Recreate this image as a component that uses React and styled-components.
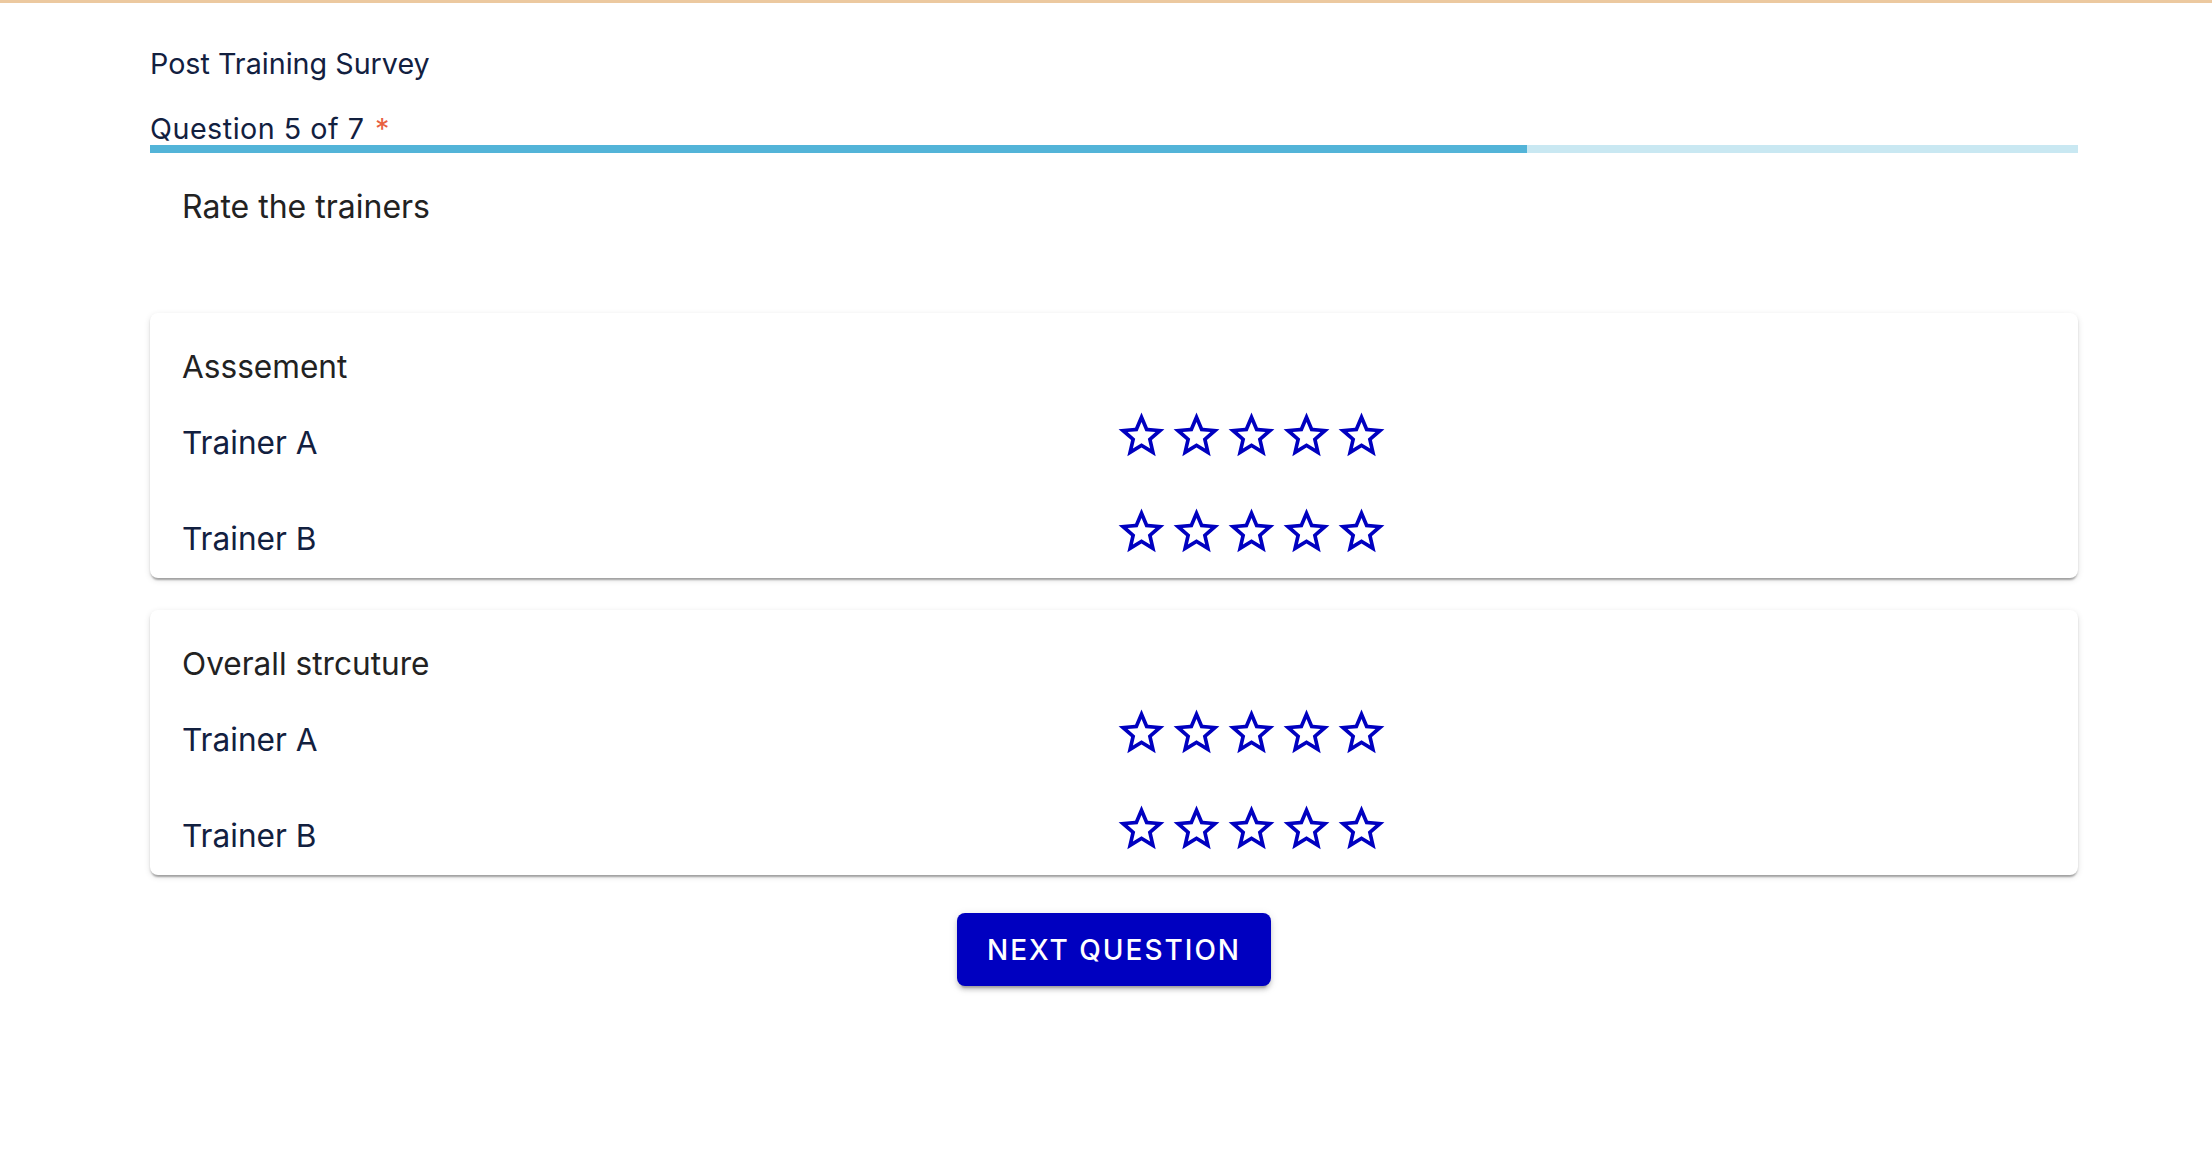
import React from "react";
import styled, { createGlobalStyle } from "styled-components";

const sections = [
  { title: "Asssement", trainers: ["Trainer A", "Trainer B"] },
  { title: "Overall strcuture", trainers: ["Trainer A", "Trainer B"] },
];

const StarIcon = () => (
  <svg viewBox="0 0 24 24" width="55" height="55" fill="currentColor">
    <path d="M22 9.24l-7.19-.62L12 2 9.19 8.63 2 9.24l5.46 4.73L5.82 21 12 17.27 18.18 21l-1.63-7.03L22 9.24zM12 15.4l-3.76 2.27 1-4.28-3.32-2.88 4.38-.38L12 6.1l1.71 4.04 4.38.38-3.32 2.88 1 4.28L12 15.4z" />
  </svg>
);

const App = () => {
  const current = 5;
  const total = 7;
  return (
    <>
      <GlobalStyle />
      <Page>
        <Container>
          <SurveyTitle>Post Training Survey</SurveyTitle>
          <QuestionLabel>
            Question {current} of {total} <Required>*</Required>
          </QuestionLabel>
          <Progress>
            <ProgressFill style={{ width: `${(current / total) * 100}%` }} />
          </Progress>
          <Prompt>Rate the trainers</Prompt>
          <Cards>
            {sections.map((s) => (
              <Card key={s.title}>
                <CardTitle>{s.title}</CardTitle>
                <Rows>
                  {s.trainers.map((t) => (
                    <Row key={t}>
                      <TrainerName>{t}</TrainerName>
                      <Rating>
                        {[1, 2, 3, 4, 5].map((n) => (
                          <StarButton key={n} aria-label={`${n} Stars`}>
                            <StarIcon />
                          </StarButton>
                        ))}
                      </Rating>
                    </Row>
                  ))}
                </Rows>
              </Card>
            ))}
          </Cards>
          <Actions>
            <NextButton>Next Question</NextButton>
          </Actions>
        </Container>
      </Page>
    </>
  );
};

export default App;

const GlobalStyle = createGlobalStyle`
  body {
    margin: 0;
    background: #ffffff;
    font-family: "Inter", "Roboto", "Liberation Sans", sans-serif;
  }
`;

const Page = styled.div`
  min-height: 1162px;
  border-top: 3px solid #ecc9a0;
  box-sizing: border-box;
  padding-top: 42px;
`;

const Container = styled.div`
  width: 1928px;
  margin-left: 150px;
`;

const SurveyTitle = styled.div`
  font-size: 28.7px;
  line-height: 38px;
  color: #12203f;
`;

const QuestionLabel = styled.div`
  margin-top: 23px;
  padding-top: 6px;
  font-size: 28.7px;
  line-height: 33px;
  letter-spacing: 0.5px;
  color: #12203f;
`;

const Required = styled.span`
  margin-left: 2px;
  color: #e8603f;
`;

const Progress = styled.div`
  height: 8px;
  background: #c9e8f2;
  overflow: hidden;
`;

const ProgressFill = styled.div`
  height: 100%;
  background: #53b4d8;
`;

const Prompt = styled.div`
  margin-top: 30px;
  padding-left: 32px;
  font-size: 32px;
  line-height: 48px;
  color: #222222;
`;

const Cards = styled.div`
  margin-top: 82px;
  display: flex;
  flex-direction: column;
  gap: 32px;
`;

const Card = styled.div`
  background: #ffffff;
  border-radius: 8px;
  padding: 30px 32px 15px;
  box-shadow: 0 4px 2px -2px rgba(0, 0, 0, 0.2), 0 2px 2px 0 rgba(0, 0, 0, 0.14),
    0 2px 6px 0 rgba(0, 0, 0, 0.12);
`;

const CardTitle = styled.div`
  font-size: 31.6px;
  line-height: 48px;
  color: #222222;
`;

const Rows = styled.div`
  margin-top: 17px;
  display: flex;
  flex-direction: column;
  gap: 37px;
`;

const Row = styled.div`
  display: grid;
  grid-template-columns: 1fr 1fr;
  align-items: start;
`;

const TrainerName = styled.div`
  margin-top: 11px;
  font-size: 31.6px;
  line-height: 48px;
  color: #12203f;
`;

const Rating = styled.div`
  display: flex;
  color: #0000c0;
`;

const StarButton = styled.span`
  display: flex;
  width: 55px;
  height: 55px;
  cursor: pointer;
`;

const Actions = styled.div`
  margin-top: 38px;
  display: flex;
  justify-content: center;
`;

const NextButton = styled.button`
  height: 73px;
  padding: 0 30px;
  border: none;
  border-radius: 8px;
  background: #0000c0;
  color: #ffffff;
  font-family: "Inter", "Roboto", "Liberation Sans", sans-serif;
  font-size: 28px;
  font-weight: 500;
  letter-spacing: 2px;
  text-transform: uppercase;
  cursor: pointer;
  box-shadow: 0 6px 2px -4px rgba(0, 0, 0, 0.2), 0 4px 4px 0 rgba(0, 0, 0, 0.14),
    0 2px 10px 0 rgba(0, 0, 0, 0.12);
`;
